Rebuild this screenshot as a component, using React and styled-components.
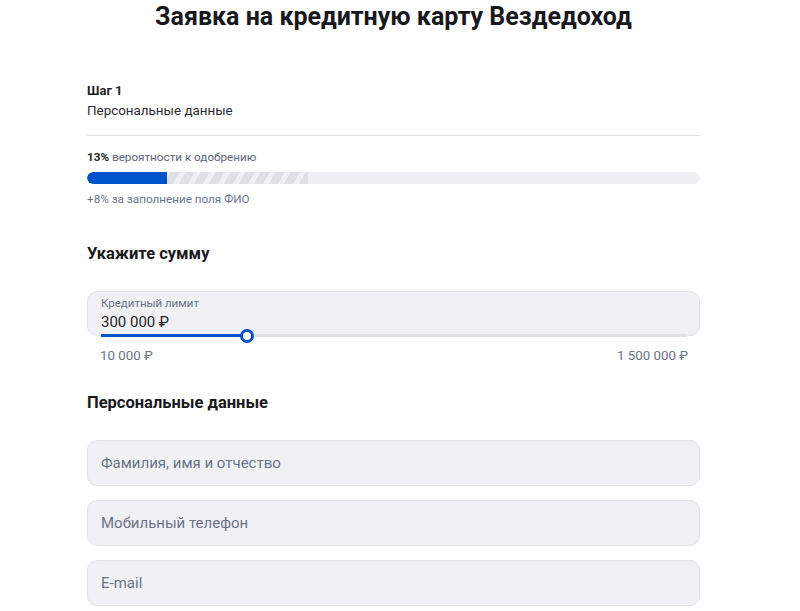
import styled, { createGlobalStyle } from "styled-components";

const GlobalStyle = createGlobalStyle`
    body {
        margin: 0;
        background: #ffffff;
        font-family: Roboto, "Liberation Sans", Arial, sans-serif;
        color: #1f1f24;
    }
`;

const Page = styled.div`
    width: 613px;
    margin-left: 87px;
    display: flex;
    flex-direction: column;
`;

const Title = styled.h1`
    margin: 0;
    padding-top: 1px;
    font-size: 25px;
    line-height: 32px;
    font-weight: 700;
    text-align: center;
    color: #18181c;
`;

const Step = styled.div`
    margin-top: 49px;
    padding-bottom: 15px;
    border-bottom: 1px solid #e2e2e8;
`;

const StepNumber = styled.div`
    font-size: 13px;
    line-height: 18px;
    font-weight: 700;
`;

const StepName = styled.div`
    margin-top: 2px;
    font-size: 13.4px;
    line-height: 18px;
    color: #2a2a30;
`;

const Chance = styled.div`
    margin-top: 13px;
    font-size: 11.7px;
    line-height: 16px;
    color: #5d6478;

    b {
        color: #1f1f24;
        font-weight: 700;
    }
`;

const Bar = styled.div`
    margin-top: 7px;
    height: 12px;
    border-radius: 6px;
    background: #f0f0f4;
    display: flex;
    overflow: hidden;
`;

const BarFill = styled.div`
    background: #0052cc;
    border-radius: 6px 0 0 6px;
`;

const BarHint = styled.div`
    background: repeating-linear-gradient(
        -60deg,
        #dfe0e6 0,
        #dfe0e6 8px,
        #f0f0f4 8px,
        #f0f0f4 13px
    );
`;

const BarNote = styled.div`
    margin-top: 7px;
    font-size: 11.7px;
    line-height: 16px;
    color: #6b7388;
`;

const SectionTitle = styled.h2`
    margin: ${(p) => p.$top}px 0 0;
    font-size: 16.5px;
    line-height: 22px;
    font-weight: 700;
    color: #18181c;
`;

const LimitField = styled.div`
    position: relative;
    margin-top: 26px;
    height: 45px;
    border: 1px solid #e3e3ea;
    border-radius: 10px;
    background: #f1f1f5;
    padding: 4px 13px 0;
    box-sizing: border-box;
`;

const FieldLabel = styled.div`
    font-size: 11.5px;
    line-height: 14px;
    color: #6b7388;
`;

const FieldValue = styled.div`
    margin-top: 2px;
    font-size: 15px;
    line-height: 20px;
    color: #1f1f24;
`;

const Track = styled.div`
    position: absolute;
    left: 13px;
    right: 12px;
    bottom: -2px;
    height: 3px;
    background: #e0e1e6;
`;

const TrackFill = styled.div`
    height: 100%;
    background: #0052cc;
`;

const Thumb = styled.div`
    position: absolute;
    top: 50%;
    width: 14px;
    height: 14px;
    margin: -7px 0 0 -7px;
    border: 3px solid #0052cc;
    border-radius: 50%;
    background: #ffffff;
    box-sizing: border-box;
`;

const Range = styled.div`
    margin-top: 12px;
    padding: 0 12px 0 13px;
    display: flex;
    justify-content: space-between;
    font-size: 13.3px;
    line-height: 16px;
    color: #6b7388;
`;

const Fields = styled.div`
    margin-top: 26px;
    display: flex;
    flex-direction: column;
    gap: 14px;
`;

const Input = styled.input`
    height: 46px;
    border: 1px solid #e3e3ea;
    border-radius: 10px;
    background: #f1f1f5;
    padding: 0 13px;
    box-sizing: border-box;
    font-family: inherit;
    font-size: 15px;
    color: #1f1f24;
    outline: none;

    &::placeholder {
        color: #6b7388;
    }
`;

const limit = { min: 10000, max: 1500000, value: 300000 };

function App() {
    const pct = ((limit.value - limit.min) / (limit.max - limit.min)) * 100 + 5.4;
    return (
        <>
            <GlobalStyle />
            <Page>
                <Title>Заявка на кредитную карту Вездедоход</Title>
                <Step>
                    <StepNumber>Шаг 1</StepNumber>
                    <StepName>Персональные данные</StepName>
                </Step>
                <Chance>
                    <b>13%</b> вероятности к одобрению
                </Chance>
                <Bar>
                    <BarFill style={{ width: "13%" }} />
                    <BarHint style={{ width: "23%" }} />
                </Bar>
                <BarNote>+8% за заполнение поля ФИО</BarNote>

                <SectionTitle $top={36}>Укажите сумму</SectionTitle>
                <LimitField>
                    <FieldLabel>Кредитный лимит</FieldLabel>
                    <FieldValue>300 000 ₽</FieldValue>
                    <Track>
                        <TrackFill style={{ width: `${pct}%` }} />
                        <Thumb style={{ left: `${pct}%` }} />
                    </Track>
                </LimitField>
                <Range>
                    <span>10 000 ₽</span>
                    <span>1 500 000 ₽</span>
                </Range>

                <SectionTitle $top={28}>Персональные данные</SectionTitle>
                <Fields>
                    <Input placeholder="Фамилия, имя и отчество" />
                    <Input placeholder="Мобильный телефон" />
                    <Input placeholder="E-mail" />
                </Fields>
            </Page>
        </>
    );
}

export default App;
